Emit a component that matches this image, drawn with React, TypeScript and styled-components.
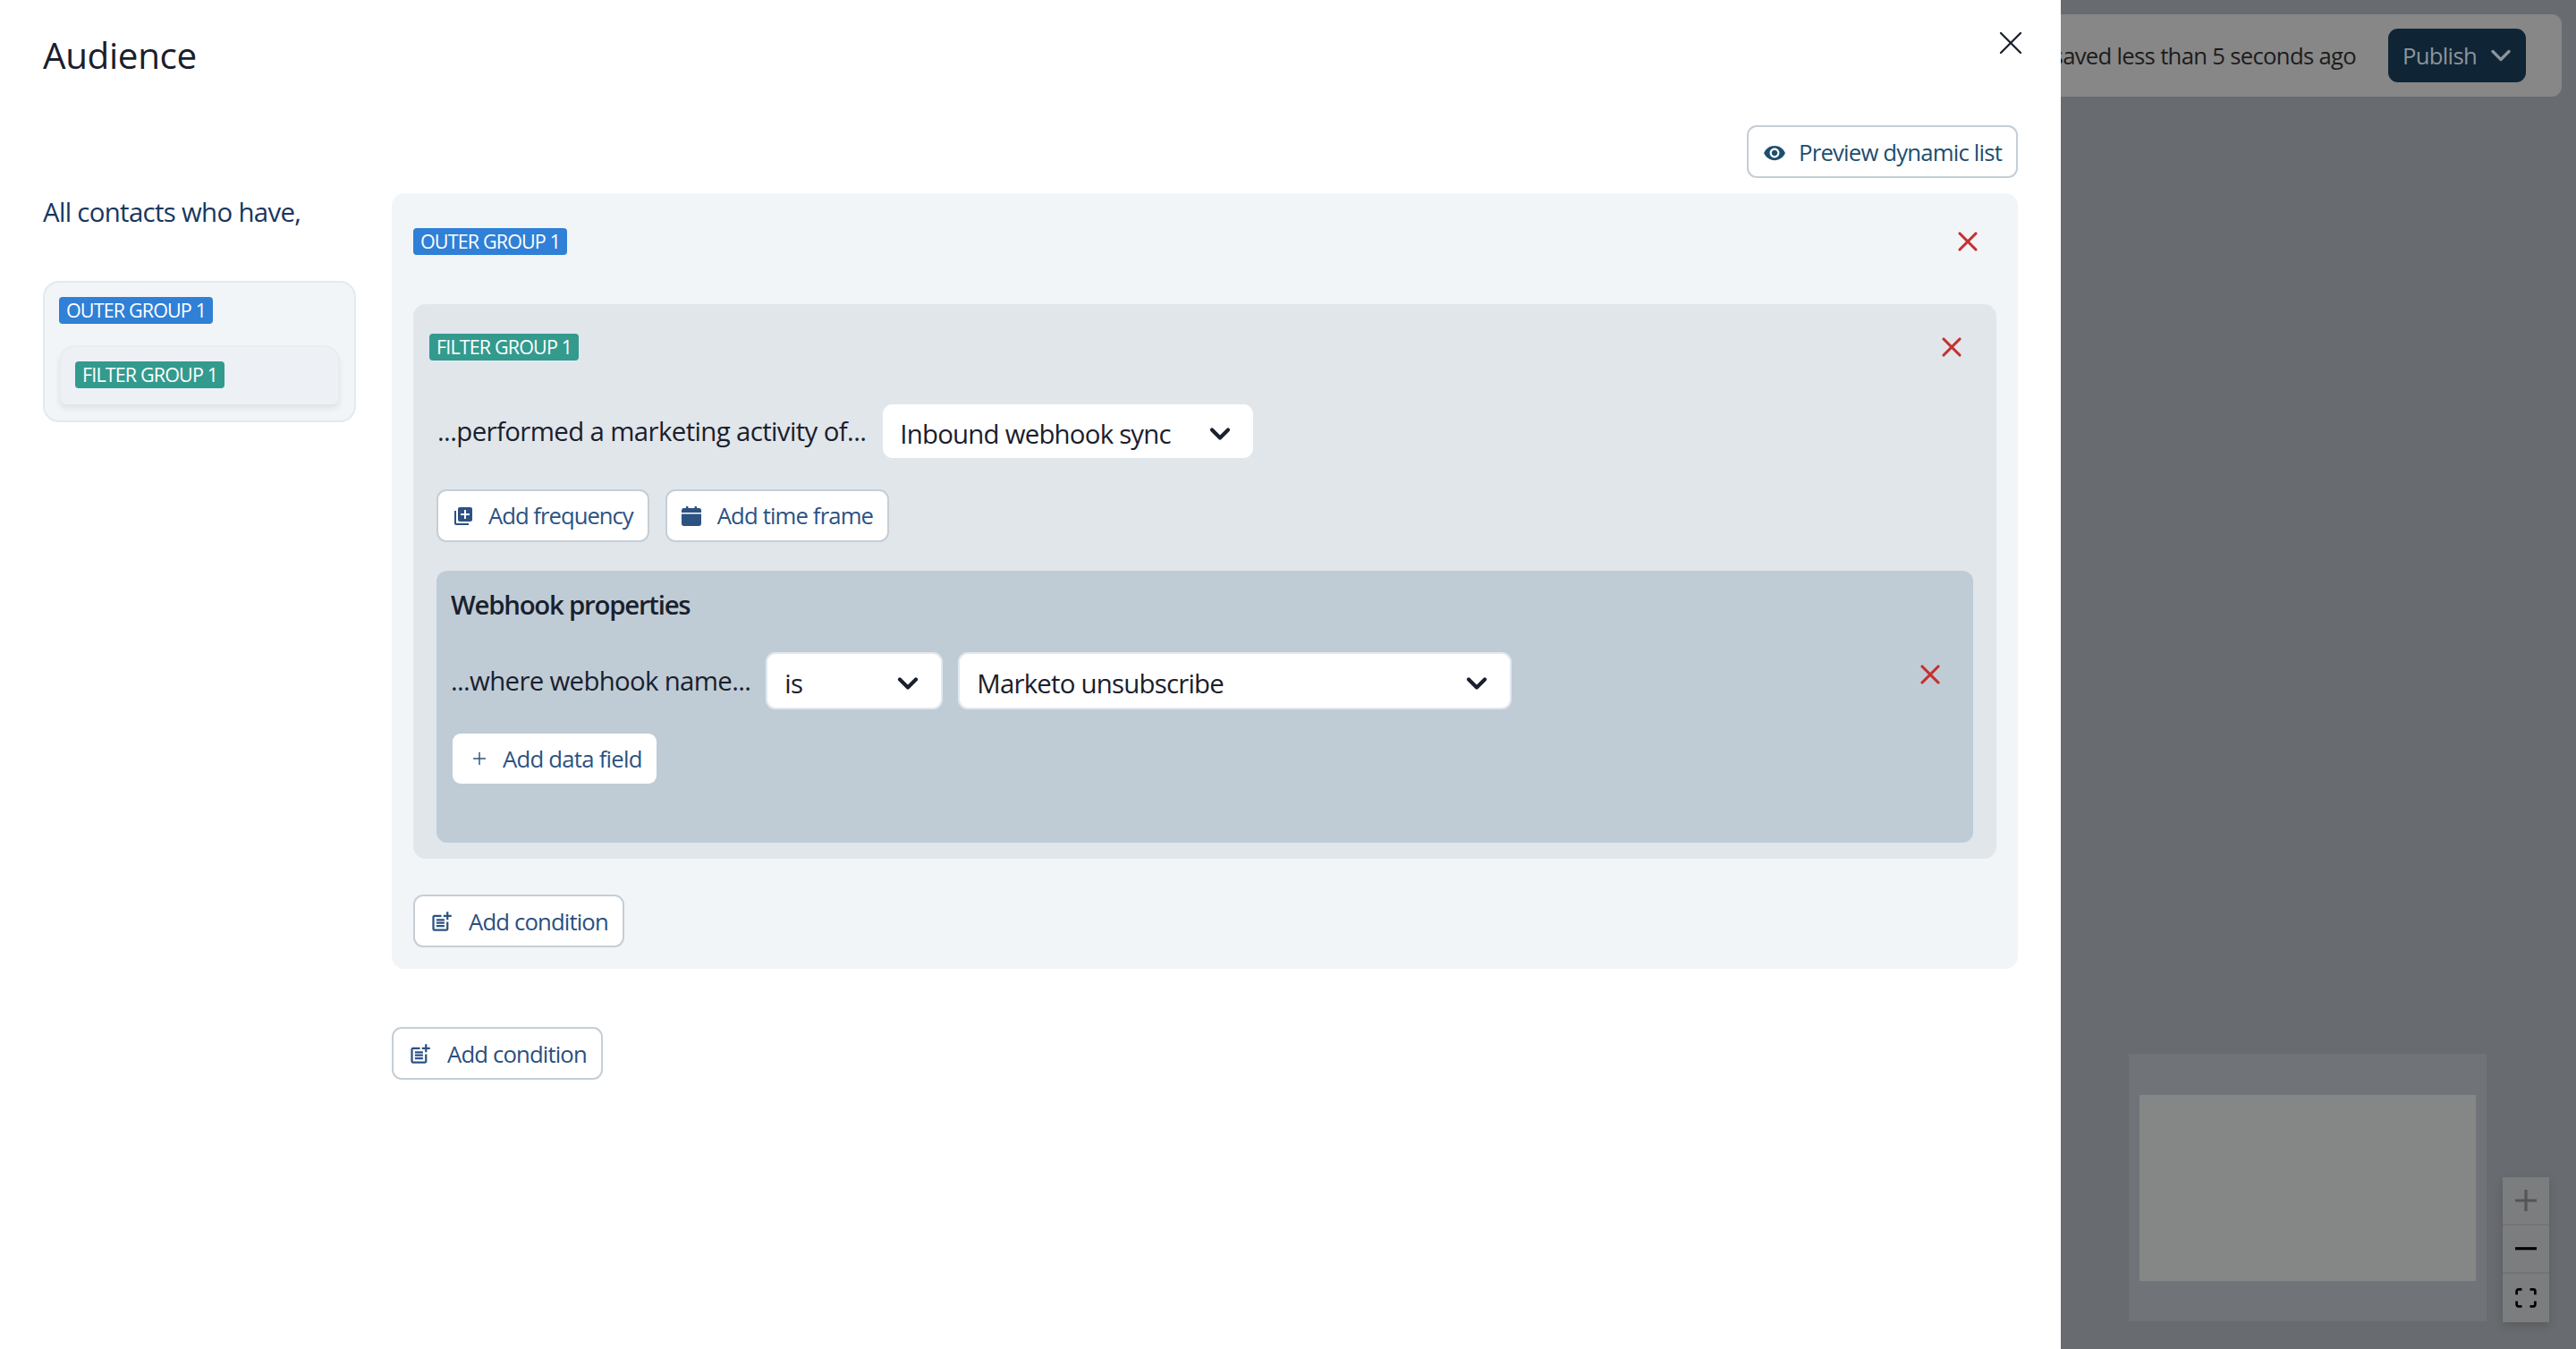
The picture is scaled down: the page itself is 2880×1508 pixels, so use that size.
import React from "react";
import styled, { createGlobalStyle } from "styled-components";
import { ChevronDown, Plus, X } from "lucide-react";
import { MdLibraryAdd, MdOutlinePostAdd, MdVisibility } from "react-icons/md";

const GlobalStyle = createGlobalStyle`
  html, body {
    margin: 0;
    padding: 0;
    height: 100%;
  }
  body {
    font-family: "Open Sans", "Noto Sans", sans-serif;
    color: #1a202c;
    background: #686c70;
  }
`;

const S = {
  Page: styled.div`
    position: relative;
    width: 2880px;
    height: 1508px;
    overflow: hidden;
    background: #686c70;
  `,
  TopBar: styled.div`
    position: absolute;
    top: 16px;
    right: 16px;
    width: 800px;
    height: 92px;
    padding-right: 40px;
    box-sizing: border-box;
    display: flex;
    align-items: center;
    justify-content: flex-end;
    gap: 36px;
    background: #878787;
    border-radius: 11px;
  `,
  SavedText: styled.span`
    font-size: 25.7px;
    letter-spacing: -0.7px;
    color: #1c1c1c;
    white-space: nowrap;
  `,
  PublishButton: styled.div`
    width: 154px;
    height: 60px;
    padding: 0 10px 0 16px;
    box-sizing: border-box;
    display: flex;
    align-items: center;
    justify-content: space-between;
    border-radius: 11px;
    background: #0f2536;
    color: #8c949b;
    font-size: 25.7px;
    font-weight: 500;
    letter-spacing: -0.7px;
  `,
  MiniMap: styled.div`
    position: absolute;
    left: 2380px;
    top: 1178px;
    width: 400px;
    height: 299px;
    background: #707479;
  `,
  MiniNode: styled.div`
    position: absolute;
    left: 12px;
    top: 46px;
    width: 376px;
    height: 208px;
    background: #858787;
  `,
  Controls: styled.div`
    position: absolute;
    left: 2798px;
    top: 1316px;
    width: 52px;
    display: flex;
    flex-direction: column;
    box-shadow: 0 4px 10px rgba(0, 0, 0, 0.15);
  `,
  ControlButton: styled.div<{ $last?: boolean }>`
    height: 54px;
    display: flex;
    align-items: center;
    justify-content: center;
    box-sizing: border-box;
    background: #7b7d7f;
    border-bottom: ${({ $last }) => ($last ? "none" : "2px solid #727476")};
  `,
  Drawer: styled.div`
    position: absolute;
    left: 0;
    top: 0;
    bottom: 0;
    width: 2304px;
    padding: 0 48px;
    box-sizing: border-box;
    background: #fff;
  `,
  DrawerHeader: styled.div`
    height: 140px;
    display: flex;
    align-items: flex-start;
    justify-content: space-between;
  `,
  Title: styled.h2`
    margin: 34px 0 0;
    font-size: 40.4px;
    line-height: 56px;
    font-weight: 500;
    letter-spacing: -0.35px;
    color: #1a202c;
  `,
  CloseButton: styled.div`
    margin: 26px -14px 0 0;
    width: 44px;
    height: 44px;
    color: #1a202c;
  `,
  Toolbar: styled.div`
    display: flex;
    justify-content: flex-end;
    margin-bottom: 17px;
  `,
  Button: styled.div<{ $color?: string; $weight?: number; $gap?: number; $spacing?: number }>`
    height: 59px;
    padding: ${({ $weight }) => ($weight ? "2px" : "0")} 16px 0;
    box-sizing: border-box;
    display: inline-flex;
    align-items: center;
    gap: ${({ $gap }) => $gap ?? 16}px;
    align-self: flex-start;
    background: #fff;
    border: 2px solid #c5ced6;
    border-radius: 11px;
    color: ${({ $color }) => $color ?? "#2c5282"};
    font-size: 25.7px;
    font-weight: ${({ $weight }) => $weight ?? 400};
    letter-spacing: ${({ $spacing }) => $spacing ?? -0.86}px;
    white-space: nowrap;
  `,
  Body: styled.div`
    display: grid;
    grid-template-columns: 350px 1fr;
    column-gap: 40px;
  `,
  Sidebar: styled.div`
    display: flex;
    flex-direction: column;
  `,
  Lead: styled.div`
    margin-bottom: 55px;
    font-size: 29.4px;
    line-height: 43px;
    letter-spacing: -0.68px;
    color: #1a365d;
  `,
  MiniOuter: styled.div`
    height: 158px;
    padding: 16px;
    box-sizing: border-box;
    background: #f2f5f8;
    border: 2px solid #e4e9ee;
    border-radius: 18px;
  `,
  MiniFilter: styled.div`
    margin-top: 24px;
    height: 66px;
    padding: 16px;
    box-sizing: border-box;
    background: #edf1f5;
    border: 2px solid #e8ecf0;
    border-bottom: none;
    border-radius: 18px 18px 8px 8px;
    box-shadow: 0 5px 6px rgba(0, 0, 0, 0.07);
  `,
  Badge: styled.span<{ $bg: string }>`
    display: inline-flex;
    align-items: center;
    height: 30px;
    padding: 0 8px;
    box-sizing: border-box;
    border-radius: 4px;
    background: ${({ $bg }) => $bg};
    color: #fff;
    font-size: 21.5px;
    font-weight: 500;
    letter-spacing: -0.85px;
    line-height: 1;
    white-space: nowrap;
  `,
  Main: styled.div`
    display: flex;
    flex-direction: column;
    align-items: stretch;
  `,
  OuterGroup: styled.div`
    padding: 39px 24px 24px;
    background: #f2f5f8;
    border-radius: 14px;
    display: flex;
    flex-direction: column;
  `,
  OuterHeader: styled.div`
    height: 30px;
    padding-right: 14px;
    margin-bottom: 55px;
    display: flex;
    align-items: center;
    justify-content: space-between;
  `,
  FilterGroup: styled.div`
    margin-bottom: 40px;
    padding: 33px 26px 18px;
    background: #e1e6eb;
    border-radius: 14px;
  `,
  FilterHeader: styled.div`
    height: 30px;
    margin: 0 6px 49px -8px;
    display: flex;
    align-items: center;
    justify-content: space-between;
  `,
  ActivityRow: styled.div`
    padding-left: 1px;
    display: flex;
    align-items: center;
    gap: 19px;
    margin-bottom: 35px;
  `,
  Label: styled.span<{ $spacing?: number }>`
    font-size: 29.4px;
    line-height: 40px;
    letter-spacing: ${({ $spacing }) => $spacing ?? -0.62}px;
    color: #1a202c;
    white-space: nowrap;
  `,
  Select: styled.div<{ $width: number; $height: number; $border?: boolean }>`
    width: ${({ $width }) => $width}px;
    height: ${({ $height }) => $height}px;
    box-sizing: border-box;
    padding: 5px 19px 0 19px;
    display: flex;
    align-items: center;
    justify-content: space-between;
    background: #fff;
    border-radius: 11px;
    border: ${({ $border }) => ($border ? "2px solid #e2e8f0" : "none")};
    font-size: 29.4px;
    letter-spacing: -0.78px;
    color: #1a202c;
    white-space: nowrap;
    flex: none;
  `,
  ButtonRow: styled.div`
    display: flex;
    gap: 18px;
    margin-bottom: 32px;
  `,
  WebhookPanel: styled.div`
    height: 304px;
    padding: 16px 30px 0 16px;
    box-sizing: border-box;
    background: #bfccd6;
    border-radius: 12px;
    display: flex;
    flex-direction: column;
  `,
  PanelTitle: styled.div`
    font-size: 29.4px;
    line-height: 44px;
    font-weight: 600;
    letter-spacing: -1.25px;
    color: #1a202c;
    margin-bottom: 31px;
  `,
  ConditionRow: styled.div`
    display: flex;
    align-items: center;
    gap: 17px;
    margin-bottom: 27px;
  `,
  RemoveRow: styled.div`
    margin: -14px 0 0 auto;
    display: flex;
  `,
  AddField: styled.div`
    margin-left: 2px;
    align-self: flex-start;
    height: 56px;
    padding: 0 16px 0 19px;
    box-sizing: border-box;
    display: inline-flex;
    align-items: center;
    gap: 15px;
    background: #fff;
    border-radius: 9px;
    color: #2c5282;
    font-size: 25.7px;
    letter-spacing: -0.75px;
    white-space: nowrap;
  `,
  SecondAdd: styled.div`
    margin-top: 65px;
    display: flex;
  `,
};

const RemoveIcon = () => <X size={36} color="#c53030" strokeWidth={2.1} />;
const SelectChevron = () => <ChevronDown size={36} color="#1a202c" strokeWidth={2.8} />;

const CalendarIcon = () => (
  <svg width="22" height="22" viewBox="0 0 22 22" fill="#2c5282">
    <path d="M5 0h2.4v2H14.6V0H17v2h2.6A2.4 2.4 0 0 1 22 4.4V7H0V4.4A2.4 2.4 0 0 1 2.4 2H5z" />
    <path d="M0 8.6h22v11A2.4 2.4 0 0 1 19.6 22H2.4A2.4 2.4 0 0 1 0 19.6z" />
  </svg>
);

const AddCondition = () => (
  <S.Button $color="#2a4f80" $weight={500} $gap={17} $spacing={-0.85}>
    <MdOutlinePostAdd size={27} color="#2c5282" />
    Add condition
  </S.Button>
);

const ZoomIn = () => (
  <svg width="24" height="24" viewBox="0 0 32 32" fill="#555">
    <path d="M32 18.133H18.133V32h-4.266V18.133H0v-4.266h13.867V0h4.266v13.867H32z" />
  </svg>
);

const ZoomOut = () => (
  <svg width="24" height="4" viewBox="0 0 32 5" fill="#000">
    <path d="M0 0h32v4.2H0z" />
  </svg>
);

const FitView = () => (
  <svg width="24" height="22" viewBox="0 0 32 30" fill="#000">
    <path d="M3.692 4.63c0-.53.4-.938.939-.938h5.215V0H4.708C2.13 0 0 2.054 0 4.63v5.216h3.692V4.631zM27.354 0h-5.2v3.692h5.17c.53 0 .984.4.984.939v5.215H32V4.631A4.624 4.624 0 0027.354 0zm.954 24.83c0 .532-.4.94-.939.94h-5.215v3.768h5.215c2.577 0 4.631-2.13 4.631-4.707v-5.139h-3.692v5.139zm-23.677.94c-.531 0-.939-.4-.939-.94v-5.138H0v5.139c0 2.577 2.13 4.707 4.708 4.707h5.138V25.77H4.631z" />
  </svg>
);

const App: React.FC = () => (
  <>
    <GlobalStyle />
    <S.Page>
      <S.TopBar>
        <S.SavedText>saved less than 5 seconds ago</S.SavedText>
        <S.PublishButton>
          Publish
          <ChevronDown size={36} strokeWidth={2.2} />
        </S.PublishButton>
      </S.TopBar>

      <S.MiniMap>
        <S.MiniNode />
      </S.MiniMap>
      <S.Controls>
        <S.ControlButton>
          <ZoomIn />
        </S.ControlButton>
        <S.ControlButton>
          <ZoomOut />
        </S.ControlButton>
        <S.ControlButton $last>
          <FitView />
        </S.ControlButton>
      </S.Controls>

      <S.Drawer>
        <S.DrawerHeader>
          <S.Title>Audience</S.Title>
          <S.CloseButton>
            <X size={44} strokeWidth={1.3} />
          </S.CloseButton>
        </S.DrawerHeader>

        <S.Toolbar>
          <S.Button $color="#1d4e6e" $weight={500} $gap={14} $spacing={-0.8}>
            <MdVisibility size={26} color="#1d4e6e" />
            Preview dynamic list
          </S.Button>
        </S.Toolbar>

        <S.Body>
          <S.Sidebar>
            <S.Lead>All contacts who have,</S.Lead>
            <S.MiniOuter>
              <S.Badge $bg="#2f80d6">OUTER GROUP 1</S.Badge>
              <S.MiniFilter>
                <S.Badge $bg="#339a8e">FILTER GROUP 1</S.Badge>
              </S.MiniFilter>
            </S.MiniOuter>
          </S.Sidebar>

          <S.Main>
            <S.OuterGroup>
              <S.OuterHeader>
                <S.Badge $bg="#2f80d6">OUTER GROUP 1</S.Badge>
                <RemoveIcon />
              </S.OuterHeader>

              <S.FilterGroup>
                <S.FilterHeader>
                  <S.Badge $bg="#339a8e">FILTER GROUP 1</S.Badge>
                  <RemoveIcon />
                </S.FilterHeader>

                <S.ActivityRow>
                  <S.Label>...performed a marketing activity of...</S.Label>
                  <S.Select $width={414} $height={60}>
                    Inbound webhook sync
                    <SelectChevron />
                  </S.Select>
                </S.ActivityRow>

                <S.ButtonRow>
                  <S.Button $spacing={-1}>
                    <MdLibraryAdd size={24} color="#2c5282" />
                    Add frequency
                  </S.Button>
                  <S.Button $gap={18}>
                    <CalendarIcon />
                    Add time frame
                  </S.Button>
                </S.ButtonRow>

                <S.WebhookPanel>
                  <S.PanelTitle>Webhook properties</S.PanelTitle>
                  <S.ConditionRow>
                    <S.Label $spacing={-0.68}>...where webhook name...</S.Label>
                    <S.Select $width={198} $height={64} $border>
                      is
                      <SelectChevron />
                    </S.Select>
                    <S.Select $width={619} $height={64} $border>
                      Marketo unsubscribe
                      <SelectChevron />
                    </S.Select>
                    <S.RemoveRow>
                      <RemoveIcon />
                    </S.RemoveRow>
                  </S.ConditionRow>
                  <S.AddField>
                    <Plus size={22} color="#2c5282" strokeWidth={1.6} />
                    Add data field
                  </S.AddField>
                </S.WebhookPanel>
              </S.FilterGroup>

              <AddCondition />
            </S.OuterGroup>

            <S.SecondAdd>
              <AddCondition />
            </S.SecondAdd>
          </S.Main>
        </S.Body>
      </S.Drawer>
    </S.Page>
  </>
);

export default App;
